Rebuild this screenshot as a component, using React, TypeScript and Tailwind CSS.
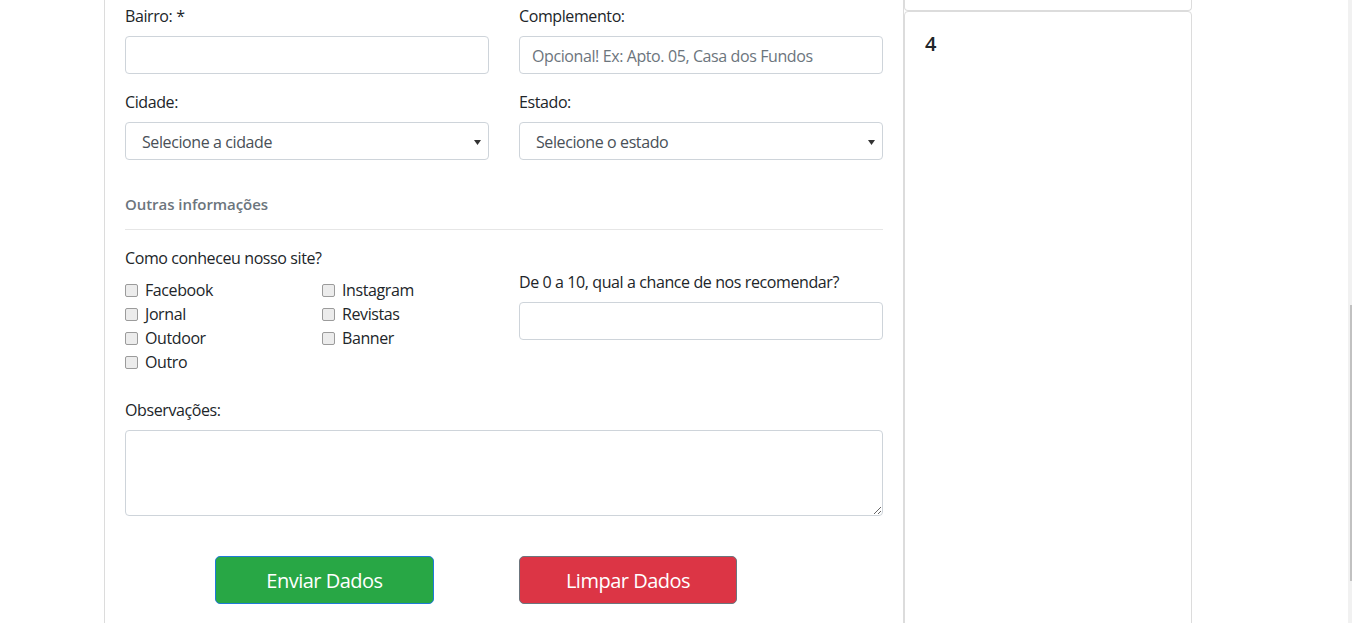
import React from 'react';

const font = { fontFamily: '"Open Sans", "Noto Sans", Arial, sans-serif' };

const Label: React.FC<{ children: React.ReactNode; className?: string }> = ({ children, className = '' }) => (
  <label className={`block text-[16px] leading-6 text-[#212529] mb-2 ${className}`}>{children}</label>
);

const Input: React.FC<{ placeholder?: string }> = ({ placeholder }) => (
  <input
    type="text"
    placeholder={placeholder}
    className="block w-full h-[38px] px-3 pt-[2px] rounded-[4px] border border-[#ced4da] bg-white text-[16px] tracking-[-0.4px] text-[#495057] placeholder:text-[#6c757d] outline-none"
  />
);

const Select: React.FC<{ text: string }> = ({ text }) => (
  <div className="flex h-[38px] w-full items-center justify-between rounded-[4px] border border-[#ced4da] bg-white pl-4 pr-[6px] pt-[2px] text-[16px] text-[#495057]">
    <span>{text}</span>
    <svg width="7" height="5" viewBox="0 0 7 5" className="mr-px">
      <path d="M0 0h7L3.5 5z" fill="#333" />
    </svg>
  </div>
);

const Check: React.FC<{ label: string }> = ({ label }) => (
  <div className="flex h-6 items-center text-[16px] text-[#212529]">
    <span className="mr-[7px] h-[13px] w-[13px] rounded-[2px] border border-[#9b9b9b] bg-[#ececec]" />
    <span>{label}</span>
  </div>
);

export default function App() {
  return (
    <div className="relative h-[623px] w-full overflow-hidden bg-white tracking-[-0.4px]" style={font}>
      <div className="ml-[104px] flex">
        {/* main form card */}
        <div className="h-[623px] w-[800px] border-x border-[#dcdcdc] px-5 pt-1">
          <div className="grid grid-cols-2 gap-x-[30px]">
            <div className="mb-4">
              <Label>Bairro: *</Label>
              <Input />
            </div>
            <div className="mb-4">
              <Label>Complemento:</Label>
              <Input placeholder="Opcional! Ex: Apto. 05, Casa dos Fundos" />
            </div>
            <div className="mb-4">
              <Label>Cidade:</Label>
              <Select text="Selecione a cidade" />
            </div>
            <div className="mb-4">
              <Label>Estado:</Label>
              <Select text="Selecione o estado" />
            </div>
          </div>

          <h5 className="mt-4 text-[15px] font-semibold leading-6 tracking-[-0.05px] text-[#6c757d]">Outras informações</h5>
          <hr className="mt-[13px] border-t border-[#e6e6e6]" />

          <div className="mt-4 grid grid-cols-2 gap-x-[30px]">
            <div>
              <Label>Como conheceu nosso site?</Label>
              <div className="grid grid-cols-2 gap-x-[30px]">
                <div>
                  <Check label="Facebook" />
                  <Check label="Jornal" />
                  <Check label="Outdoor" />
                  <Check label="Outro" />
                </div>
                <div>
                  <Check label="Instagram" />
                  <Check label="Revistas" />
                  <Check label="Banner" />
                </div>
              </div>
            </div>
            <div className="pt-6">
              <Label>De 0 a 10, qual a chance de nos recomendar?</Label>
              <Input />
            </div>
          </div>

          <div className="mt-6">
            <Label>Observações:</Label>
            <textarea className="block h-[86px] w-full rounded-[4px] border border-[#ced4da] bg-white outline-none" />
          </div>

          <div className="mt-10 flex">
            <button className="ml-[90px] h-[48px] w-[219px] rounded-[5px] border border-[#1f7bd8] bg-[#28a745] pt-[2px] text-[20px] tracking-[-0.5px] text-white">
              Enviar Dados
            </button>
            <button className="ml-[85px] h-[48px] w-[218px] rounded-[5px] border border-[#6c757d] bg-[#dc3545] pt-[2px] text-[20px] tracking-[-0.5px] text-white">
              Limpar Dados
            </button>
          </div>
        </div>

        {/* sidebar */}
        <div className="w-[288px]">
          <div className="h-[11px] rounded-b-[4px] border-x border-b border-[#dcdcdc]" />
          <div className="h-[700px] rounded-[4px] border border-[#dcdcdc] p-5">
            <p className="text-[20px] font-semibold leading-6 text-[#212529]">4</p>
          </div>
        </div>
      </div>

      {/* scrollbar */}
      <div className="absolute right-0 top-0 h-full w-[4px] bg-[#f1f1f1]">
        <div className="ml-[2px] mt-[305px] h-[276px] w-[2px] bg-[#c1c1c1]" />
      </div>
    </div>
  );
}
